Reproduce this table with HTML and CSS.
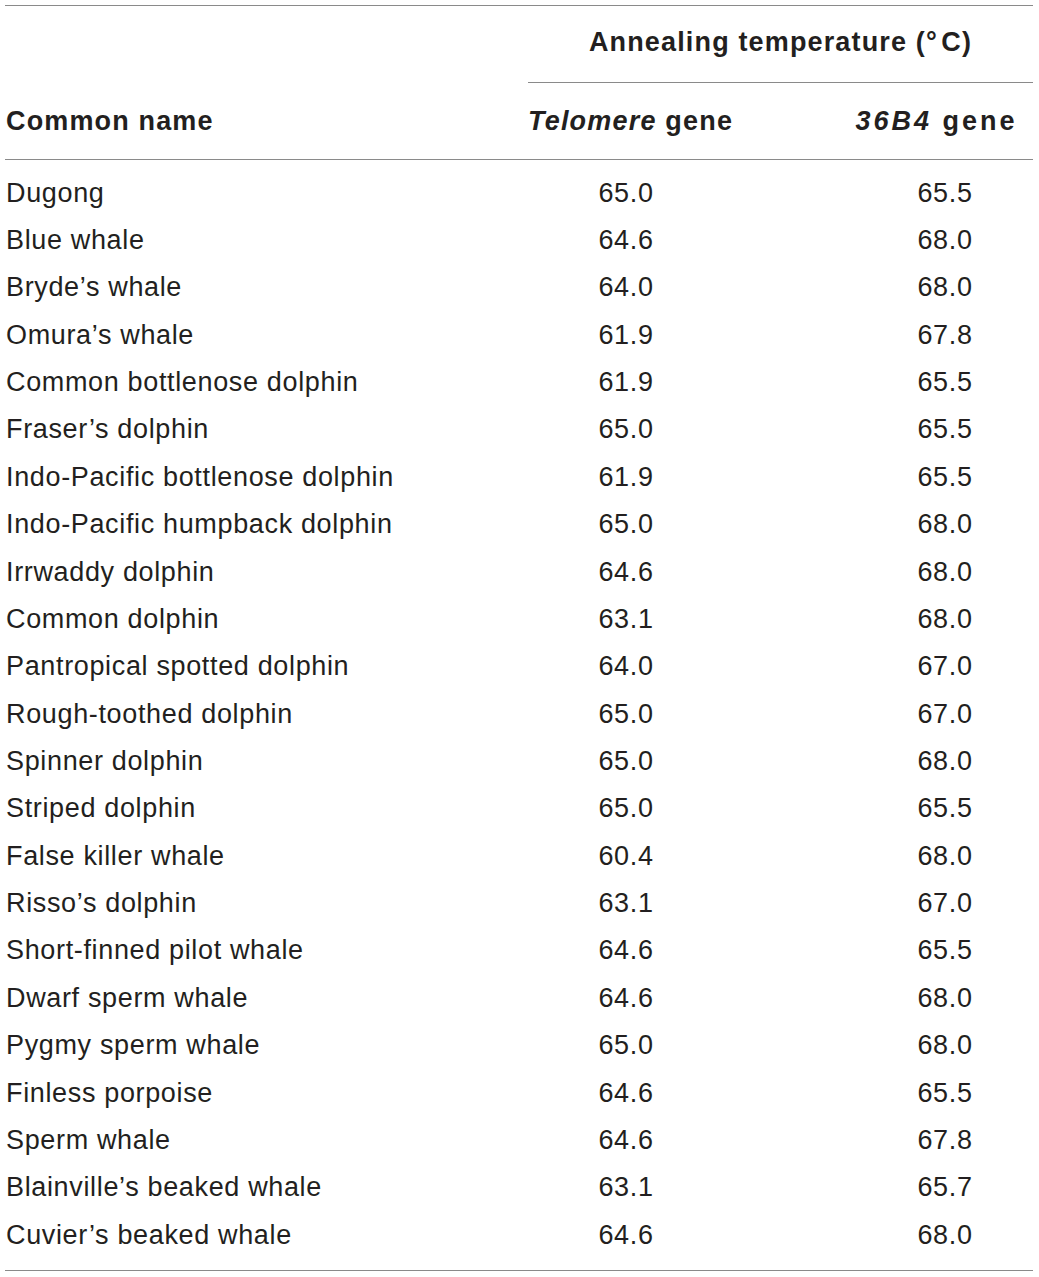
FILE: index.html
```html
<!DOCTYPE html>
<html lang="en">
<head>
<meta charset="utf-8">
<title>Annealing temperature</title>
<link rel="stylesheet" href="styles.css">
</head>
<body>
<table class="data">
  <colgroup>
    <col class="c-name">
    <col class="c-tel">
    <col class="c-b4">
  </colgroup>
  <thead>
    <tr class="h1">
      <th></th>
      <th colspan="2" class="span">Annealing temperature (°&#8202;C)</th>
    </tr>
    <tr class="h2">
      <th class="name">Common name</th>
      <th class="tel"><i>Telomere</i> gene</th>
      <th class="b4"><i>36B4</i> gene</th>
    </tr>
  </thead>
  <tbody>
    <tr><td>Dugong</td><td>65.0</td><td>65.5</td></tr>
    <tr><td>Blue whale</td><td>64.6</td><td>68.0</td></tr>
    <tr><td>Bryde’s whale</td><td>64.0</td><td>68.0</td></tr>
    <tr><td>Omura’s whale</td><td>61.9</td><td>67.8</td></tr>
    <tr><td>Common bottlenose dolphin</td><td>61.9</td><td>65.5</td></tr>
    <tr><td>Fraser’s dolphin</td><td>65.0</td><td>65.5</td></tr>
    <tr><td>Indo-Pacific bottlenose dolphin</td><td>61.9</td><td>65.5</td></tr>
    <tr><td>Indo-Pacific humpback dolphin</td><td>65.0</td><td>68.0</td></tr>
    <tr><td>Irrwaddy dolphin</td><td>64.6</td><td>68.0</td></tr>
    <tr><td>Common dolphin</td><td>63.1</td><td>68.0</td></tr>
    <tr><td>Pantropical spotted dolphin</td><td>64.0</td><td>67.0</td></tr>
    <tr><td>Rough-toothed dolphin</td><td>65.0</td><td>67.0</td></tr>
    <tr><td>Spinner dolphin</td><td>65.0</td><td>68.0</td></tr>
    <tr><td>Striped dolphin</td><td>65.0</td><td>65.5</td></tr>
    <tr><td>False killer whale</td><td>60.4</td><td>68.0</td></tr>
    <tr><td>Risso’s dolphin</td><td>63.1</td><td>67.0</td></tr>
    <tr><td>Short-finned pilot whale</td><td>64.6</td><td>65.5</td></tr>
    <tr><td>Dwarf sperm whale</td><td>64.6</td><td>68.0</td></tr>
    <tr><td>Pygmy sperm whale</td><td>65.0</td><td>68.0</td></tr>
    <tr><td>Finless porpoise</td><td>64.6</td><td>65.5</td></tr>
    <tr><td>Sperm whale</td><td>64.6</td><td>67.8</td></tr>
    <tr><td>Blainville’s beaked whale</td><td>63.1</td><td>65.7</td></tr>
    <tr><td>Cuvier’s beaked whale</td><td>64.6</td><td>68.0</td></tr>
  </tbody>
</table>
</body>
</html>
```
FILE: styles.css
```css
html, body {
  margin: 0;
  padding: 0;
  background: #ffffff;
}

body {
  padding: 5px 0 0 5px;
  font-family: "Liberation Sans", Arial, sans-serif;
  color: #231f20;
}

.data {
  border-collapse: collapse;
  table-layout: fixed;
  width: 1028px;
  border-top: 1px solid #8a8a8a;
  border-bottom: 1px solid #8a8a8a;
  font-size: 27px;
  letter-spacing: 0.65px;
}

.c-name { width: 523px; }
.c-tel { width: 196px; }
.c-b4 { width: 309px; }

.data th {
  font-weight: bold;
  letter-spacing: 1.15px;
  padding: 0;
  height: 76px;
  line-height: 30px;
  vertical-align: middle;
  white-space: nowrap;
}

.data th i {
  font-style: italic;
}

.h1 th {
  padding-bottom: 4px;
  height: 72px;
}

.h1 .span {
  text-align: center;
  border-bottom: 1px solid #8a8a8a;
}

.h2 th {
  border-bottom: 1px solid #8a8a8a;
}

.h2 .name {
  text-align: left;
  padding-left: 1px;
}

.h2 .tel {
  text-align: center;
  letter-spacing: 1.2px;
  padding-right: 12px;
}

.h2 .b4 {
  text-align: center;
  padding-left: 116px;
  letter-spacing: 3px;
}

.data td {
  padding: 0;
  height: 47.36px;
  line-height: 30px;
  vertical-align: middle;
  text-align: center;
  white-space: nowrap;
}

.data td:first-child {
  text-align: left;
  padding-left: 1px;
}

.data td:last-child {
  padding-left: 133px;
}

.data tbody tr:first-child td {
  padding-top: 9px;
}

.data tbody tr:last-child td {
  padding-bottom: 12px;
}
```
